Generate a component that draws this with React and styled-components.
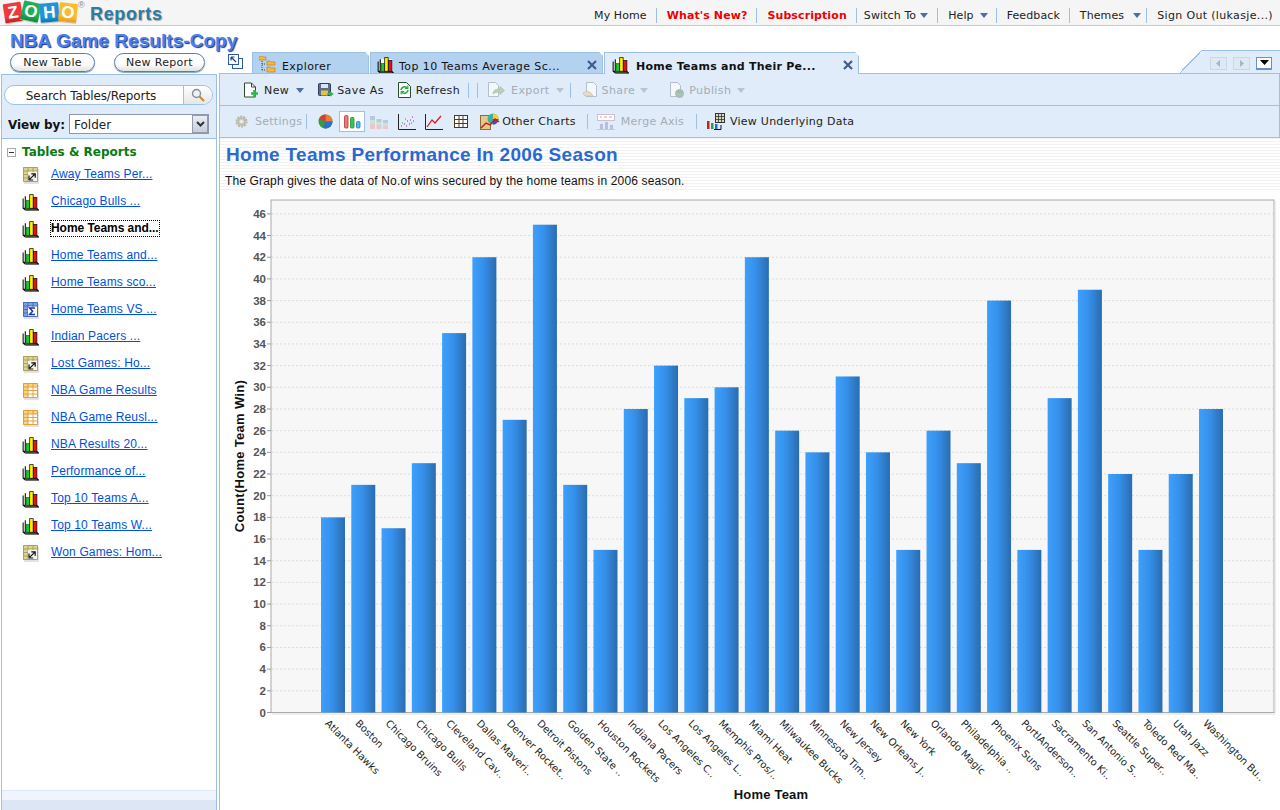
import React from "react";
import styled, { createGlobalStyle } from "styled-components";

const Global = createGlobalStyle`
  html, body { margin: 0; padding: 0; background: #fff; }
  body { font-family: "DejaVu Sans", Verdana, sans-serif; font-size: 11px; color: #111; }
  #root { width: 1280px; height: 810px; overflow: hidden; }
`;

const BLUE = "#e0ecf9";
const LINE = "#9dc0e5";

const Page = styled.div`
  width: 1280px; height: 810px; display: flex; flex-direction: column; overflow: hidden;
`;
const TopBar = styled.header`
  height: 25px; flex: none; display: flex; justify-content: space-between; align-items: center;
  background: #f5f5f5; border-bottom: 1px solid #ccc;
`;
const Logo = styled.div`
  display: flex; align-items: center; padding-left: 4px; height: 25px;
`;
const Tile = styled.span`
  width: ${p => p.$w || 18}px; height: 19px; flex: none;
  display: flex; align-items: center; justify-content: center; border-radius: 1px;
  background: linear-gradient(${p => p.$c} 70%, ${p => p.$d});
  color: #fff; font: bold 17px "Liberation Sans", sans-serif;
  box-shadow: 0 1px 1px #bbb;
  transform: translateY(${p => p.$y || 0}px) rotate(${p => p.$r}deg);
`;
const Reg = styled.span`
  font: 9px "Liberation Sans", sans-serif; color: #888; align-self: flex-start;
  margin: 0 5px 0 1px; width: 7px; line-height: 10px;
`;
const LogoWord = styled.span`
  font: bold 18px "Liberation Sans", sans-serif; color: #2c7ba4; letter-spacing: .65px;
  text-shadow: 1px 1px 1px #aaa; margin-top: 3px;
`;
const Nav = styled.nav`
  display: flex; align-items: center; height: 25px; padding: 5px 7px 0 0; box-sizing: border-box;
`;
const NavItem = styled.span`
  display: flex; align-items: center; height: 15px; white-space: nowrap;
  padding: 0 ${p => p.$pr ?? 9}px 0 ${p => p.$pl ?? 10}px;
  border-left: ${p => (p.$first ? "none" : `1px solid ${LINE}`)};
  font-weight: ${p => (p.$red ? "bold" : "normal")};
  color: ${p => (p.$red ? "#f00000" : "#222")};
  font-size: 11px; letter-spacing: ${p => p.$ls ?? 0.1}px;
`;
const Caret = styled.i`
  display: inline-block; margin-left: ${p => p.$ml ?? 4}px; width: 0; height: 0;
  border-left: 4px solid transparent; border-right: 4px solid transparent;
  border-top: 5px solid ${p => (p.$off ? "#b9c4d0" : "#4c6f9f")};
`;

const Body = styled.div`
  flex: 1; display: flex; min-height: 0;
`;
const Side = styled.aside`
  width: 219px; flex: none; display: flex; flex-direction: column;
`;
const ProjectTitle = styled.h1`
  margin: 3px 0 0 10px; height: 23px; white-space: nowrap;
  font: bold 19px/23px "Liberation Sans", sans-serif; color: #4a7ff0; letter-spacing: .05px;
  text-shadow: 1px 1px 1px #123a7a;
`;
const SideActions = styled.div`
  display: flex; gap: 19px; padding: 1px 0 0 10px; height: 22px; box-sizing: border-box;
`;
const PillButton = styled.button`
  width: ${p => p.$w}px; height: 19px; padding: 0; border: 1px solid #4f7fb8; border-radius: 10px;
  background: linear-gradient(#fff 55%, #e2e2e2); color: #222;
  font: 11px "DejaVu Sans", sans-serif; box-shadow: 0 1px 1px #8aa; letter-spacing: .3px;
`;
const Panel = styled.div`
  flex: 1; min-height: 0; margin: 0 2px 0 1px; display: flex; flex-direction: column;
  border: 1px solid ${LINE}; border-bottom: none;
`;
const PanelHead = styled.div`
  height: 64px; flex: none; background: ${BLUE}; border-bottom: 1px solid ${LINE};
  padding: 10px 3px 0 2px; box-sizing: border-box;
`;
const SearchBox = styled.div`
  height: 20px; box-sizing: border-box; display: flex; border: 1px solid ${LINE}; border-radius: 10px;
  background: #fff; overflow: hidden;
`;
const SearchText = styled.span`
  flex: 1; text-align: center; font: 12px/20px "DejaVu Sans", sans-serif; color: #222;
  padding-right: 6px; letter-spacing: -.1px;
`;
const SearchBtn = styled.span`
  width: 28px; border-left: 1px solid ${LINE}; background: linear-gradient(#fff, #e6e6e6);
  display: flex; align-items: center; justify-content: center;
`;
const ViewRow = styled.div`
  display: flex; align-items: center; margin-top: 9px; height: 20px; padding-left: 4px;
`;
const ViewLabel = styled.span`
  width: 61px; padding-top: 2px; font: bold 12px "DejaVu Sans", sans-serif; color: #111; letter-spacing: -.1px;
`;
const Select = styled.div`
  width: 140px; height: 20px; border: 1px solid #8d99a8; background: #fff; display: flex;
  justify-content: space-between; align-items: center; padding: 1px 0 0 4px; box-sizing: border-box;
  font-size: 12px; color: #222;
`;
const SelectBtn = styled.span`
  width: 16px; height: 18px; margin-top: -1px; background: linear-gradient(#e8edf5, #c4cfdf);
  border: 1px solid #99a; box-sizing: border-box; display: flex; align-items: center; justify-content: center;
`;
const Tree = styled.div`
  flex: 1; padding: 5px 0 0 5px; min-height: 0; background: #fff;
`;
const TreeHead = styled.div`
  display: flex; align-items: center; height: 16px; gap: 6px;
  font: bold 12px "DejaVu Sans", sans-serif; color: #0a7a12;
`;
const Minus = styled.span`
  width: 9px; height: 9px; border: 1px solid #aaa; box-sizing: border-box;
  display: flex; align-items: center; justify-content: center;
  &::before { content: ""; width: 5px; height: 1px; background: #333; }
`;
const TreeList = styled.div`
  display: flex; flex-direction: column; padding: 1px 0 0 15px;
`;
const TreeRow = styled.div`
  height: 27px; display: flex; align-items: center; gap: 12px;
`;
const TreeLink = styled.a`
  font: ${p => (p.$on ? "bold" : "normal")} 12px/15px "Liberation Sans", sans-serif;
  color: ${p => (p.$on ? "#000" : "#0050e0")};
  text-decoration: ${p => (p.$on ? "none" : "underline")};
  outline: ${p => (p.$on ? "1px dotted #000" : "none")};
  letter-spacing: ${p => (p.$on ? "-.05px" : ".15px")};
`;
const PanelFoot = styled.div`
  flex: none; height: 20px; border-top: 1px solid #dfe8f5; box-sizing: border-box;
  background: linear-gradient(#f0f5fd 0 9px, #dde6f5 9px);
`;

const Main = styled.main`
  flex: 1; min-width: 0; display: flex; flex-direction: column;
`;
const TabRow = styled.div`
  height: 47px; flex: none; display: flex; align-items: flex-end; padding-left: 9px;
`;
const ExpandBtn = styled.span`
  width: 24px; align-self: flex-start; margin-top: 28px; flex: none; display: block;
`;
const Tab = styled.div`
  width: ${p => p.$w}px; height: 21px; flex: none; display: flex; align-items: center; gap: ${p => p.$gap ?? 5}px;
  padding: 3px 5px 0 ${p => p.$pl ?? 6}px; box-sizing: border-box; margin-right: 1px; white-space: nowrap;
  background: ${p => (p.$on ? BLUE : "#b3d2f0")};
  border: 1px solid ${LINE}; border-bottom: none;
  clip-path: polygon(0 0, calc(100% - 4px) 0, 100% 4px, 100% 100%, 0 100%);
  font-size: 11px; font-weight: ${p => (p.$on ? "bold" : "normal")}; color: #111;
  ${p => p.$on && "height: 22px; margin-bottom: -1px; position: relative; z-index: 1;"}
`;
const TabText = styled.span`
  flex: 1; padding-top: ${p => (p.$on ? 2 : 4)}px; letter-spacing: ${p => (p.$on ? ".25px" : ".42px")};
`;
const Corner = styled.div`
  margin-left: auto; display: flex; height: 23px;
`;
const Slope = styled.div`
  width: 22px; height: 23px;
  background: linear-gradient(to bottom right, transparent 48%, ${LINE} 48%, ${LINE} 52%, ${BLUE} 52%);
`;
const CornerBody = styled.div`
  width: 78px; box-sizing: border-box; background: ${BLUE}; border-top: 1px solid ${LINE};
  display: flex; align-items: center; gap: 6px; padding: 2px 0 0 8px;
`;
const ScrollBtn = styled.span`
  width: ${p => (p.$on ? 16 : 17)}px; height: 13px; box-sizing: border-box; display: flex;
  align-items: center; justify-content: center;
  border: 1px solid ${p => (p.$on ? "#6a8fc4" : "#c9d8e9")};
  background: ${p => (p.$on ? "#fff" : "#dfe9f4")};
  border-bottom-width: ${p => (p.$on ? 2 : 1)}px;
`;
const Bar = styled.div`
  height: ${p => p.$h}px; flex: none; display: flex; align-items: center; box-sizing: border-box;
  background: ${BLUE}; border: 1px solid ${LINE}; border-width: ${p => (p.$top ? "1px" : "0 1px 1px")};
  padding: ${p => (p.$top ? "1px" : "0")} 0 0 ${p => p.$pl}px; font-size: 11px; white-space: nowrap;
  letter-spacing: ${p => (p.$top ? ".4px" : ".25px")};
`;
const Tool = styled.span`
  display: flex; align-items: center; gap: ${p => p.$gap ?? 6}px; margin-right: ${p => p.$mr ?? 0}px;
  color: ${p => (p.$off ? "#a3adb8" : "#1c1c1c")}; height: 100%;
`;
const Sep = styled.i`
  width: 1px; height: 15px; background: ${LINE}; margin-right: ${p => p.$mr}px; flex: none;
`;
const IconOnly = styled.span`
  display: flex; align-items: center; justify-content: center; flex: none;
  margin-right: ${p => p.$mr ?? 0}px;
  ${p => p.$on && `width: 26px; height: 21px; border: 1px solid ${LINE}; background: #fff; box-sizing: border-box;`}
`;
const Content = styled.section`
  flex: 1; min-height: 0; border-left: 1px solid ${LINE}; display: flex; flex-direction: column;
`;
const Intro = styled.div`
  height: 52px; flex: none; padding-left: 5px; box-sizing: border-box;
  background: repeating-linear-gradient(#f2f2f2 0 1px, #fff 1px 3px);
`;
const Heading = styled.h2`
  margin: 6px 0 0 1px; font: bold 19px/22px "Liberation Sans", sans-serif; color: #2a68d4;
  letter-spacing: .3px;
`;
const Desc = styled.p`
  margin: 7px 0 0; font: 12px/16px "Liberation Sans", sans-serif; color: #111;
  letter-spacing: .15px;
`;
const ChartWrap = styled.div`
  flex: 1; min-height: 0;
`;

const ChartIcon = () => (
  <svg width="17" height="18" viewBox="0 0 15.5 16.5">
    <path d="M4 15h11.5v1.5H4z" fill="#bdbdbd" opacity=".7" />
    <path d="M3 3h11v11H3z" fill="#fff" />
    <path d="M1 5v9l2 1.5h12l-1.5-1.5H1M3 3v11" fill="none" stroke="#111" strokeWidth="1" />
    <rect x="3.6" y="7" width="3.2" height="7" fill="#22c32e" stroke="#0c5c14" strokeWidth=".6" />
    <rect x="7" y="1.5" width="3.2" height="12.5" fill="#ffef00" stroke="#111" strokeWidth=".7" />
    <rect x="10.4" y="4" width="3.2" height="10" fill="#e01414" stroke="#111" strokeWidth=".7" />
  </svg>
);
const GridIcon = ({ fill, line, children }) => (
  <svg width="17" height="18" viewBox="0 0 17 18">
    <rect x="2" y="3" width="15" height="15" fill="#c8c8c8" opacity=".55" />
    <rect x="1" y="1" width="15" height="15" fill={fill} />
    <rect x="6" y="5" width="9.5" height="10.5" fill="#fff" />
    <path d="M1.5 1.5h14v14h-14zM6 2v13.5M11 2v13.5M1.5 5h14M1.5 8.5h14M1.5 12h14" fill="none" stroke={line} strokeWidth=".9" />
    {children}
  </svg>
);
const QueryIcon = () => (
  <GridIcon fill="#dcd493" line="#a79b52">
    <rect x="6" y="6" width="9" height="9" fill="#f4f4ec" />
    <path d="M7.8 13.2l4.6-4.6M9.3 7.8h3.9v3.9M7 9.6v4.4h4.2" stroke="#111" fill="none" strokeWidth="1.2" />
  </GridIcon>
);
const SigmaIcon = () => (
  <GridIcon fill="#7fa2e2" line="#3f68bf">
    <rect x="6" y="6" width="9" height="9" fill="#fff" />
    <path d="M13 7H7.6l3 3.2-3 3.2H13" stroke="#1d38a8" strokeWidth="1.5" fill="none" />
  </GridIcon>
);
const TableIcon = () => <GridIcon fill="#f9d486" line="#e09a2e" />;
const NewIcon = () => (
  <svg width="16" height="17" viewBox="0 0 16 17">
    <path d="M1.5 1h7l4 4v10h-11z" fill="#fff" stroke="#2d4a2d" />
    <path d="M8.5 1v4h4" fill="none" stroke="#2d4a2d" />
    <path d="M11.5 8v7M8 11.5h7" stroke="#2eb84c" strokeWidth="2.6" />
  </svg>
);
const SaveIcon = () => (
  <svg width="16" height="16" viewBox="0 0 16 16">
    <rect x=".5" y="1.5" width="12" height="12" rx="1" fill="#5b6e92" stroke="#2f3d5a" />
    <rect x="3" y="2" width="7" height="4" fill="#dfe5ee" />
    <rect x="3" y="8.5" width="7" height="5" fill="#e8c23a" />
    <path d="M9 12h5M12 10l2.5 2-2.5 2" stroke="#2eb84c" strokeWidth="1.6" fill="none" />
  </svg>
);
const RefreshIcon = () => (
  <svg width="15" height="16" viewBox="0 0 15 16">
    <path d="M1.5 .5h8l4 4v11h-12z" fill="#fff" stroke="#2d4a2d" />
    <path d="M4 8a3.5 3.5 0 0 1 6-2.2M11 8a3.5 3.5 0 0 1-6 2.2" fill="none" stroke="#27a83f" strokeWidth="1.6" />
    <path d="M10.8 3.5v3h-3M4.2 12.5v-3h3" fill="none" stroke="#27a83f" strokeWidth="1.2" />
  </svg>
);
const ExportIcon = () => (
  <svg width="18" height="16" viewBox="0 0 18 16">
    <path d="M1.5 .5h7l3 3v11h-10z" fill="#f5f8fb" stroke="#b5bfca" />
    <path d="M6 12c0-4 3-5 7-5V4.5l4.5 4-4.5 4V10c-3 0-5 .5-7 2z" fill="#b6d3b9" stroke="#9fb9a4" strokeWidth=".6" />
  </svg>
);
const ShareIcon = () => (
  <svg width="16" height="16" viewBox="0 0 16 16">
    <path d="M4.5 .5h7l3 3v11h-10z" fill="#f5f8fb" stroke="#b5bfca" />
    <path d="M1 11l4-2 4 2 2 3H3z" fill="#e8dcc4" stroke="#c4bda6" strokeWidth=".7" />
  </svg>
);
const PublishIcon = () => (
  <svg width="16" height="16" viewBox="0 0 16 16">
    <path d="M1.5 .5h7l3 3v11h-10z" fill="#f5f8fb" stroke="#b5bfca" />
    <circle cx="10.5" cy="11.5" r="4" fill="#a9c7a7" stroke="#a8b2c6" />
    <path d="M8 10c2-1 3 1 5 0" stroke="#9aa7cf" fill="none" />
  </svg>
);
const GearIcon = () => (
  <svg width="15" height="15" viewBox="0 0 15 15">
    <circle cx="7.5" cy="7.5" r="5" fill="#d7d7d0" stroke="#b9b6a8" strokeWidth="2" strokeDasharray="2 1.1" />
    <circle cx="7.5" cy="7.5" r="3.6" fill="#cfcdbf" stroke="#b9b6a8" />
    <circle cx="7.5" cy="7.5" r="1.6" fill="#eef1f5" />
  </svg>
);
const PieIcon = () => (
  <svg width="15" height="15" viewBox="0 0 15 15">
    <circle cx="7.5" cy="7.5" r="7" fill="#2e9e3f" />
    <path d="M7.5 7.5V.5A7 7 0 0 1 14.5 7.5z" fill="#f07d2c" />
    <path d="M7.5 7.5H14.5A7 7 0 0 1 5 14z" fill="#2d6fd0" />
    <path d="M7.5 7.5L1 5A7 7 0 0 1 7.5 .5z" fill="#e23a3a" />
  </svg>
);
const BarsIcon = () => (
  <svg width="18" height="15" viewBox="0 0 18 15">
    <rect x="1.5" y="1.5" width="3.5" height="12.5" rx="1" fill="#f27878" stroke="#b33" strokeWidth=".8" />
    <rect x="7.5" y="3.5" width="3.5" height="10.5" rx="1" fill="#37c94f" stroke="#1b8a33" strokeWidth=".8" />
    <rect x="13.5" y="7.5" width="3.5" height="6.5" rx="1" fill="#59b4f5" stroke="#2278b8" strokeWidth=".8" />
  </svg>
);
const StackedIcon = () => (
  <svg width="18" height="15" viewBox="0 0 18 15" opacity=".75">
    <path d="M0 2h5v4H0zM6.5 5h5v3h-5zM13 6h5v3h-5z" fill="#a9bde6" />
    <path d="M0 6h5v4H0zM6.5 8h5v3h-5zM13 9h5v3h-5z" fill="#bfe3c2" />
    <path d="M0 10h5v5H0zM6.5 11h5v4h-5zM13 12h5v3h-5z" fill="#f2b8c0" />
  </svg>
);
const ScatterIcon = () => (
  <svg width="18" height="16" viewBox="0 0 18 16">
    <path d="M.5 0v15.5H18" fill="none" stroke="#222" />
    <path d="M3 12h1M6 10h1M8 12h1M9 7h1M12 6h1M11 10h1M14 3h1M15 7h1" stroke="#b01ea0" strokeWidth="1" />
    <path d="M4 9h1M7 5h1M13 9h1" stroke="#18a040" strokeWidth="1" />
  </svg>
);
const LineIcon = () => (
  <svg width="18" height="16" viewBox="0 0 18 16">
    <path d="M.5 0v15.5H18" fill="none" stroke="#222" />
    <path d="M2 13l5-7 3 3 6-7" fill="none" stroke="#d81818" strokeWidth="1.2" />
  </svg>
);
const DataTableIcon = () => (
  <svg width="14" height="13" viewBox="0 0 14 13">
    <rect x=".5" y=".5" width="13" height="12" fill="#fff" stroke="#4a3a22" />
    <path d="M5 1v12M9 1v12M1 4.5h12M1 8.5h12" stroke="#4a3a22" />
  </svg>
);
const OtherChartsIcon = () => (
  <svg width="20" height="17" viewBox="0 0 20 17">
    <rect x=".5" y="2.5" width="10" height="14" fill="#e6c98a" stroke="#8a6d3a" />
    <circle cx="13" cy="6" r="5.5" fill="#3fb0a0" />
    <path d="M13 6V.5A5.5 5.5 0 0 1 18.5 6z" fill="#f0d030" />
    <path d="M13 6h5.5A5.5 5.5 0 0 1 13 11.5z" fill="#3a50c8" />
    <path d="M1 15l5-5 4 2 5-6 4 3" fill="none" stroke="#d01818" strokeWidth="1.4" />
  </svg>
);
const MergeIcon = () => (
  <svg width="18" height="16" viewBox="0 0 18 16">
    <rect x=".5" y=".5" width="17" height="6" fill="#fff" stroke="#cdbfd0" />
    <path d="M3 3h2M7 3h3M12 3h3" stroke="#d8a0a8" />
    <path d="M3 15V10h3v5zM8 15V8h3v7zM13 15v-4h3v4z" fill="#b6bfe0" />
    <path d="M0 15.5h18" stroke="#c3c8d4" />
  </svg>
);
const UnderlyingIcon = () => (
  <svg width="18" height="17" viewBox="0 0 18 17">
    <rect x="8.5" y=".5" width="9" height="9" fill="#d9d9c0" stroke="#333" />
    <path d="M8.5 3.5h9M8.5 6.5h9M11.5 1v9M14.5 1v9" stroke="#333" strokeWidth=".8" />
    <rect x="0" y="8" width="2.5" height="8" fill="#c81e1e" />
    <rect x="4" y="10" width="2.5" height="6" fill="#2aa23c" />
    <rect x="8" y="11" width="2.5" height="5" fill="#2a6ad0" />
    <path d="M7 16.5h7M14 12v4.5" stroke="#111" />
  </svg>
);
const Magnifier = () => (
  <svg width="14" height="14" viewBox="0 0 14 14">
    <circle cx="5.5" cy="5.5" r="4" fill="#eef2f6" stroke="#8a8f96" strokeWidth="1.4" />
    <path d="M8.5 8.5l4.5 4.5" stroke="#c08a2c" strokeWidth="2" />
  </svg>
);
const ExpandIcon = () => (
  <svg width="15" height="15" viewBox="0 0 15 15">
    <rect x="4.5" y="4.5" width="10" height="10" fill="#fff" stroke="#2c5aa8" />
    <rect x=".5" y=".5" width="10" height="10" fill="#fff" stroke="#2c5aa8" />
    <path d="M3 3l5 5M3 3h3.5M3 3v3.5" stroke="#24427c" strokeWidth="1.2" fill="none" />
  </svg>
);
const CloseIcon = () => (
  <svg width="10" height="10" viewBox="0 0 10 10">
    <path d="M1 1l8 8M9 1l-8 8" stroke="#3f5c8f" strokeWidth="2.2" />
  </svg>
);
const ExplorerIcon = () => (
  <svg width="18" height="17" viewBox="0 0 18 17">
    <path d="M3 3v12M3 8h4M3 14h4" stroke="#444" strokeDasharray="1 1" fill="none" />
    <path d="M0 0h3l1 1h3v3H0zM8 5h3l1 1h4v3H8zM8 11h3l1 1h4v4H8z" fill="#f4b942" stroke="#c7821e" strokeWidth=".7" />
  </svg>
);
const Tri = ({ d, c }) => (
  <svg width="7" height="9" viewBox="0 0 7 9">
    <path d={d} fill={c} />
  </svg>
);

const data = [
  ["Atlanta Hawks", 18], ["Boston", 21], ["Chicago Bruins", 17], ["Chicago Bulls", 23],
  ["Cleveland Cav..", 35], ["Dallas Maveri..", 42], ["Denver Rocket..", 27], ["Detroit Pistons", 45],
  ["Golden State ..", 21], ["Houston Rockets", 15], ["Indiana Pacers", 28], ["Los Angeles C..", 32],
  ["Los Angeles L..", 29], ["Memphis Pros/..", 30], ["Miami Heat", 42], ["Milwaukee Bucks", 26],
  ["Minnesota Tim..", 24], ["New Jersey", 31], ["New Orleans J..", 24], ["New York", 15],
  ["Orlando Magic", 26], ["Philadelphia ..", 23], ["Phoenix Suns", 38], ["PortlAnderson..", 15],
  ["Sacramento Ki..", 29], ["San Antonio S..", 39], ["Seattle Super..", 22], ["Toledo Red Ma..", 15],
  ["Utah Jazz", 22], ["Washington Bu..", 28],
];

const OX = 220, OY = 190;
const SCALE = 10.84;
const yOf = v => 712.5 - OY - v * SCALE;
const ticks = Array.from({ length: 24 }, (_, i) => i * 2);

const Chart = () => (
  <svg width="1059" height="620" viewBox="0 0 1059 620" style={{ display: "block" }}>
    <defs>
      <linearGradient id="bar" x1="0" x2="1" y1="0" y2="0">
        <stop offset="0" stopColor="#3da0fc" />
        <stop offset=".45" stopColor="#3690ea" />
        <stop offset="1" stopColor="#2a6cb0" />
      </linearGradient>
    </defs>
    <rect x={271 - OX} y={200 - OY} width={1003} height={512.5} fill="#f7f7f7" stroke="#aaa" />
    <path d={`M${272 - OX} ${714 - OY}H${1275 - OX}V${201 - OY}`} fill="none" stroke="#ddd" />
    {ticks.map(t => (
      <g key={t}>
        {t > 0 && (
          <line x1={272 - OX} x2={1273 - OX} y1={yOf(t)} y2={yOf(t)} stroke="#dcdcdc" strokeDasharray="2 2" />
        )}
        <line x1={267 - OX} x2={271 - OX} y1={yOf(t)} y2={yOf(t)} stroke="#999" />
        <text x={266 - OX} y={yOf(t) + 4} textAnchor="end"
          fontFamily="'Liberation Sans', sans-serif" fontWeight="bold" fontSize="11.5" fill="#555">{t}</text>
      </g>
    ))}
    {data.map(([name, v], i) => {
      const x = 321 + i * 30.276 - OX;
      const tx = x + 3.5;
      return (
        <g key={name}>
          <rect x={x} y={yOf(v)} width={24} height={v * SCALE} fill="url(#bar)" />
          <text transform={`translate(${tx} 534) rotate(45)`} fontFamily="'DejaVu Sans', sans-serif"
            fontSize="10" fill="#222">{name}</text>
        </g>
      );
    })}
    <text transform={`translate(${244 - OX} ${456 - OY}) rotate(-90)`} textAnchor="middle"
      fontFamily="'Liberation Sans', sans-serif" fontWeight="bold" fontSize="13" letterSpacing=".3" fill="#111">Count(Home Team Win)</text>
    <text x={771 - OX} y={799 - OY} textAnchor="middle"
      fontFamily="'Liberation Sans', sans-serif" fontWeight="bold" fontSize="13" letterSpacing=".2" fill="#111">Home Team</text>
  </svg>
);

const reports = [
  ["Away Teams Per...", QueryIcon], ["Chicago Bulls ...", ChartIcon], ["Home Teams and...", ChartIcon, true],
  ["Home Teams and...", ChartIcon], ["Home Teams sco...", ChartIcon], ["Home Teams VS ...", SigmaIcon],
  ["Indian Pacers ...", ChartIcon], ["Lost Games: Ho...", QueryIcon], ["NBA Game Results", TableIcon],
  ["NBA Game Reusl...", TableIcon], ["NBA Results 20...", ChartIcon], ["Performance of...", ChartIcon],
  ["Top 10 Teams A...", ChartIcon], ["Top 10 Teams W...", ChartIcon], ["Won Games: Hom...", QueryIcon],
];

export default function App() {
  return (
    <Page>
      <Global />
      <TopBar>
        <Logo>
          <Tile $c="#ee3a3d" $d="#c81d20" $r={-9}>Z</Tile>
          <Tile $c="#1fae57" $d="#0c8a3c" $r={13} $w={18} $y={-1}>O</Tile>
          <Tile $c="#1f94da" $d="#0a74b8" $r={-5} $w={19}>H</Tile>
          <Tile $c="#fbbc2c" $d="#ea9a10" $r={6} $w={18}>O</Tile>
          <Reg>®</Reg>
          <LogoWord>Reports</LogoWord>
        </Logo>
        <Nav>
          <NavItem $first>My Home</NavItem>
          <NavItem $red>What&apos;s New?</NavItem>
          <NavItem $red>Subscription</NavItem>
          <NavItem $pl={7}>Switch To<Caret /></NavItem>
          <NavItem $pr={8}>Help<Caret $ml={6} /></NavItem>
          <NavItem>Feedback</NavItem>
          <NavItem $pr={5}>Themes<Caret $ml={9} /></NavItem>
          <NavItem $pr={0} $ls={0.35}>Sign Out (lukasje...)</NavItem>
        </Nav>
      </TopBar>
      <Body>
        <Side>
          <ProjectTitle>NBA Game Results-Copy</ProjectTitle>
          <SideActions>
            <PillButton $w={85}>New Table</PillButton>
            <PillButton $w={91}>New Report</PillButton>
          </SideActions>
          <Panel>
            <PanelHead>
              <SearchBox>
                <SearchText>Search Tables/Reports</SearchText>
                <SearchBtn><Magnifier /></SearchBtn>
              </SearchBox>
              <ViewRow>
                <ViewLabel>View by:</ViewLabel>
                <Select>
                  Folder
                  <SelectBtn>
                    <svg width="9" height="7" viewBox="0 0 9 7"><path d="M1 1l3.5 3.5L8 1" stroke="#333" strokeWidth="2" fill="none" /></svg>
                  </SelectBtn>
                </Select>
              </ViewRow>
            </PanelHead>
            <Tree>
              <TreeHead><Minus />Tables &amp; Reports</TreeHead>
              <TreeList>
                {reports.map(([name, Icon, on], i) => (
                  <TreeRow key={i}>
                    <Icon />
                    <TreeLink $on={on}>{name}</TreeLink>
                  </TreeRow>
                ))}
              </TreeList>
            </Tree>
            <PanelFoot />
          </Panel>
        </Side>
        <Main>
          <TabRow>
            <ExpandBtn><ExpandIcon /></ExpandBtn>
            <Tab $w={117}><ExplorerIcon /><TabText>Explorer</TabText></Tab>
            <Tab $w={233}><ChartIcon /><TabText>Top 10 Teams Average Sc...</TabText><CloseIcon /></Tab>
            <Tab $w={255} $on $pl={7} $gap={7}><ChartIcon /><TabText $on>Home Teams and Their Pe...</TabText><CloseIcon /></Tab>
            <Corner>
              <Slope />
              <CornerBody>
                <ScrollBtn><Tri d="M5 1L1 4.5 5 8z" c="#aab5c2" /></ScrollBtn>
                <ScrollBtn><Tri d="M2 1l4 3.5L2 8z" c="#aab5c2" /></ScrollBtn>
                <ScrollBtn $on><svg width="9" height="5" viewBox="0 0 9 5"><path d="M0 0h9L4.5 5z" fill="#000" /></svg></ScrollBtn>
              </CornerBody>
            </Corner>
          </TabRow>
          <Bar $h={33} $top $pl={23}>
            <Tool $gap={5} $mr={14}><NewIcon />New<Caret $ml={2} /></Tool>
            <Tool $gap={3} $mr={13}><SaveIcon />Save As</Tool>
            <Tool $gap={4} $mr={8}><RefreshIcon />Refresh</Tool>
            <Sep $mr={8} />
            <Sep $mr={9} />
            <Tool $off $mr={6}><ExportIcon />Export<Caret $off $ml={0} /></Tool>
            <Sep $mr={11} />
            <Tool $off $mr={21} $gap={4}><ShareIcon />Share<Caret $off $ml={1} /></Tool>
            <Tool $off $gap={4}><PublishIcon />Publish<Caret $off $ml={2} /></Tool>
          </Bar>
          <Bar $h={32} $pl={14}>
            <Tool $off $gap={6} $mr={4}><GearIcon />Settings</Tool>
            <Sep $mr={11} />
            <IconOnly $mr={6}><PieIcon /></IconOnly>
            <IconOnly $on $mr={5}><BarsIcon /></IconOnly>
            <IconOnly $mr={10}><StackedIcon /></IconOnly>
            <IconOnly $mr={9}><ScatterIcon /></IconOnly>
            <IconOnly $mr={11}><LineIcon /></IconOnly>
            <IconOnly $mr={12}><DataTableIcon /></IconOnly>
            <Tool $gap={2} $mr={11}><OtherChartsIcon />Other Charts</Tool>
            <Sep $mr={9} />
            <Tool $off $mr={12}><MergeIcon />Merge Axis</Tool>
            <Sep $mr={10} />
            <Tool $gap={5}><UnderlyingIcon />View Underlying Data</Tool>
          </Bar>
          <Content>
            <Intro>
              <Heading>Home Teams Performance In 2006 Season</Heading>
              <Desc>The Graph gives the data of No.of wins secured by the home teams in 2006 season.</Desc>
            </Intro>
            <ChartWrap><Chart /></ChartWrap>
          </Content>
        </Main>
      </Body>
    </Page>
  );
}
